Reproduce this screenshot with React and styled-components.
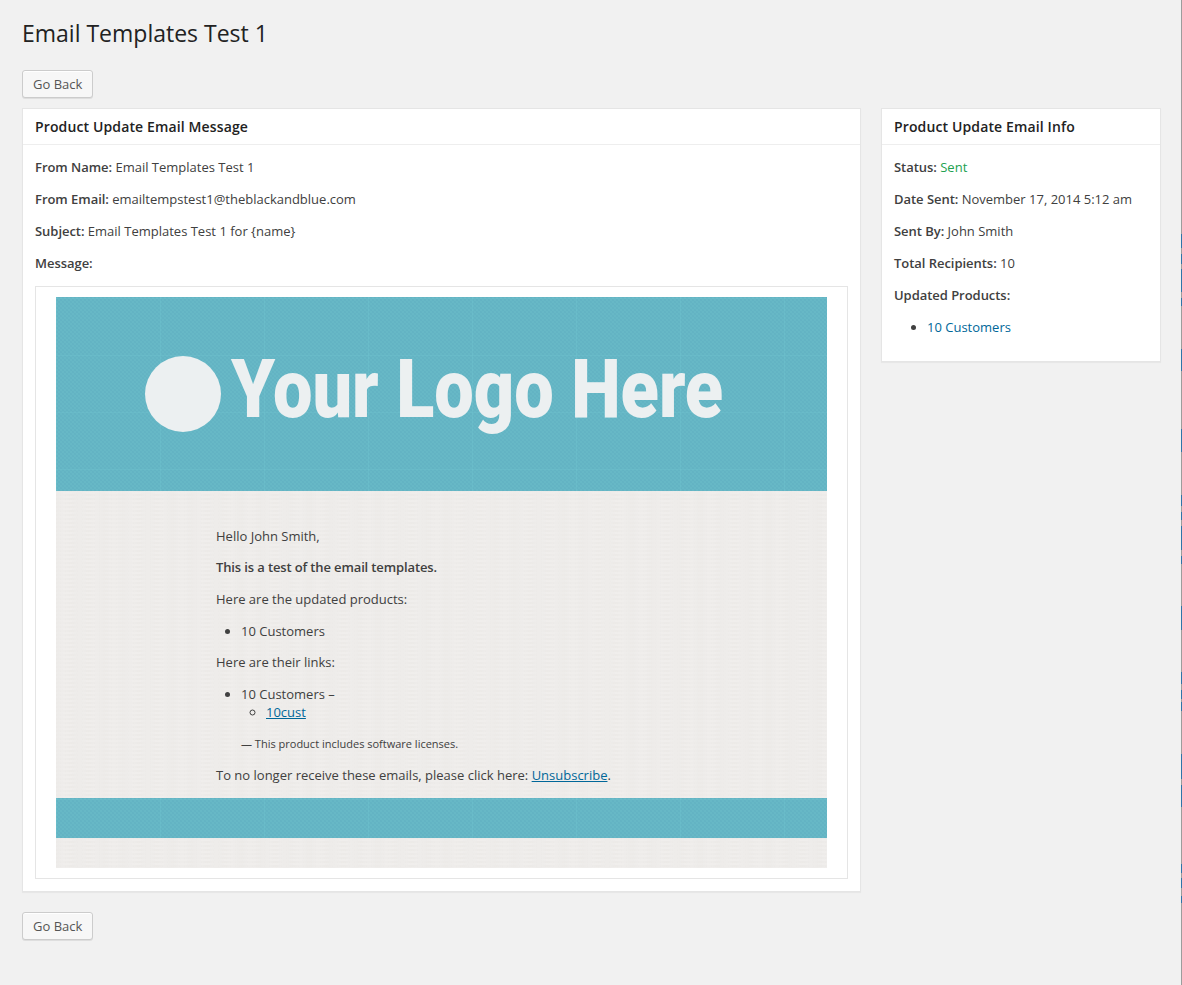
import styled, { createGlobalStyle } from "styled-components";

// the 1px sliver of the window behind, grey with blue runs
const edgeRuns = [
  [234, 248], [254, 264], [269, 292], [298, 306], [349, 371], [429, 452],
  [495, 506], [512, 520], [526, 550], [556, 564], [606, 630], [672, 684],
  [690, 699], [702, 711], [754, 779], [785, 807], [864, 873], [878, 888], [896, 903],
];
const edgeStops = edgeRuns
  .map(([a, b]) => `#9c9c9c ${a}px, #2f74a8 ${a}px, #2f74a8 ${b}px, #9c9c9c ${b}px`)
  .join(", ");

const GlobalStyle = createGlobalStyle`
  html, body {
    margin: 0;
    padding: 0;
    background: #f1f1f1;
  }
  body {
    font-family: "Open Sans", "Liberation Sans", sans-serif;
    font-size: 13px;
    line-height: 19px;
    color: #404040;
  }
`;

const Page = styled.div`
  position: relative;
  box-sizing: border-box;
  width: 1182px;
  height: 985px;
  overflow: hidden;
  padding: 19px 21px 0 22px;

  &::after {
    content: "";
    position: absolute;
    top: 0;
    right: 0;
    bottom: 0;
    width: 1px;
    background: linear-gradient(#9c9c9c 0, ${edgeStops}, #9c9c9c 100%);
  }
`;

const Title = styled.h1`
  margin: 0 0 22px;
  font-size: 23px;
  font-weight: 400;
  line-height: 29px;
  color: #222;
`;

const Button = styled.a`
  display: inline-block;
  box-sizing: border-box;
  height: 28px;
  padding: 0 10px;
  font-size: 13px;
  line-height: 26px;
  color: #555;
  background: #f7f7f7;
  border: 1px solid #ccc;
  border-radius: 3px;
  box-shadow: inset 0 1px 0 #fff, 0 1px 0 rgba(0, 0, 0, 0.08);
`;

const Columns = styled.div`
  display: flex;
  align-items: flex-start;
  gap: 20px;
  margin: 10px 0 20px;
`;

const Panel = styled.section`
  box-sizing: border-box;
  flex: none;
  width: ${(p) => p.$width}px;
  background: #fff;
  border: 1px solid #e5e5e5;
  box-shadow: 0 1px 1px rgba(0, 0, 0, 0.04);
`;

const PanelTitle = styled.h3`
  margin: 0;
  padding: 8px 12px;
  font-size: 14px;
  font-weight: 600;
  line-height: 19.4px;
  letter-spacing: 0.13px;
  color: #222;
  border-bottom: 1px solid #eee;
`;

const PanelBody = styled.div`
  padding: 13px 12px ${(p) => p.$bottom}px;
`;

const Row = styled.p`
  margin: 0 0 13px;
`;

const Label = styled.strong`
  font-weight: 600;
  letter-spacing: -0.04px;
`;

const Status = styled.span`
  color: #21a14f;
`;

const List = styled.ul`
  margin: 0 0 13px;
  padding: 0 0 0 33px;
`;

const ProductLink = styled.a`
  color: #006799;
`;

const Frame = styled.div`
  margin-top: 13px;
  padding: 10px 20px;
  border: 1px solid #e5e5e5;
`;

const Band = styled.div`
  height: ${(p) => p.$height}px;
  background-color: #67b8c6;
  background-image:
    linear-gradient(90deg, rgba(120, 205, 215, 0.22) 1px, transparent 1px),
    linear-gradient(rgba(120, 205, 215, 0.2) 1px, transparent 1px),
    repeating-conic-gradient(rgba(90, 170, 190, 0.3) 0 25%, transparent 0 50%);
  background-size: 104px 104px, 57px 57px, 4px 4px;
  background-position: 0 0, 0 1px, 0 0;
`;

const LogoBand = styled(Band)`
  display: flex;
  align-items: center;
  padding-left: 89px;
`;

const LogoMark = styled.div`
  flex: none;
  width: 76px;
  height: 76px;
  margin-right: 10px;
  border-radius: 50%;
  background: #ecf0f1;
`;

const LogoText = styled.div`
  flex: none;
  margin-top: -10px;
  font-family: Roboto, "Liberation Sans", sans-serif;
  font-size: 82px;
  font-weight: 900;
  line-height: 84px;
  white-space: nowrap;
  color: #ecf0f1;
  transform: scaleX(0.857);
  transform-origin: left center;
`;

const Paper = styled.div`
  background-color: #eeecea;
  background-image:
    radial-gradient(ellipse 11px 1px at 50% 50%, rgba(255, 255, 255, 0.24), transparent),
    radial-gradient(ellipse 8px 1px at 50% 50%, rgba(222, 219, 215, 0.22), transparent);
  background-size: 23px 4px, 17px 4px;
  background-position: 0 0, 7px 2px;
`;

const Letter = styled(Paper)`
  height: 307px;
  box-sizing: border-box;
  padding: 35.3px 0 0 160px;
`;

const LetterRow = styled.p`
  margin: 0 0 12.6px;
`;

const LetterLabel = styled.strong`
  font-weight: 600;
  letter-spacing: -0.13px;
`;

const LetterList = styled.ul`
  margin: 0 0 ${(p) => p.$gap}px;
  padding: ${(p) => p.$top}px 0 0 25px;
`;

const SubList = styled.ul`
  margin: -0.5px 0 0;
  padding-left: 25px;
  list-style: circle;
`;

const Note = styled.p`
  margin: 0 0 13px 25px;
  font-size: 11px;
  line-height: 19px;
`;

const MailLink = styled.a`
  color: #006799;
  text-decoration: underline;
`;

const PaperEnd = styled(Paper)`
  height: 30px;
`;

export default function App() {
  return (
    <>
      <GlobalStyle />
      <Page>
        <Title>Email Templates Test 1</Title>
        <Button>Go Back</Button>
        <Columns>
          <Panel $width={839}>
            <PanelTitle>Product Update Email Message</PanelTitle>
            <PanelBody $bottom={12}>
              <Row><Label>From Name:</Label> Email Templates Test 1</Row>
              <Row><Label>From Email:</Label> emailtempstest1@theblackandblue.com</Row>
              <Row><Label>Subject:</Label> Email Templates Test 1 for {"{name}"}</Row>
              <Row><Label>Message:</Label></Row>
              <Frame>
                <LogoBand $height={194}>
                  <LogoMark />
                  <LogoText>Your Logo Here</LogoText>
                </LogoBand>
                <Letter>
                  <LetterRow>Hello John Smith,</LetterRow>
                  <LetterRow><LetterLabel>This is a test of the email templates.</LetterLabel></LetterRow>
                  <LetterRow>Here are the updated products:</LetterRow>
                  <LetterList $top={0.4} $gap={12.2}><li>10 Customers</li></LetterList>
                  <LetterRow>Here are their links:</LetterRow>
                  <LetterList $top={0} $gap={11.4}>
                    <li>
                      10 Customers –
                      <SubList><li><MailLink>10cust</MailLink></li></SubList>
                    </li>
                  </LetterList>
                  <Note>— This product includes software licenses.</Note>
                  <LetterRow>To no longer receive these emails, please click here: <MailLink>Unsubscribe</MailLink>.</LetterRow>
                </Letter>
                <Band $height={40} />
                <PaperEnd />
              </Frame>
            </PanelBody>
          </Panel>
          <Panel $width={280}>
            <PanelTitle>Product Update Email Info</PanelTitle>
            <PanelBody $bottom={11}>
              <Row><Label>Status:</Label> <Status>Sent</Status></Row>
              <Row><Label>Date Sent:</Label> November 17, 2014 5:12 am</Row>
              <Row><Label>Sent By:</Label> John Smith</Row>
              <Row><Label>Total Recipients:</Label> 10</Row>
              <Row><Label>Updated Products:</Label></Row>
              <List><li><ProductLink>10 Customers</ProductLink></li></List>
            </PanelBody>
          </Panel>
        </Columns>
        <Button>Go Back</Button>
      </Page>
    </>
  );
}
